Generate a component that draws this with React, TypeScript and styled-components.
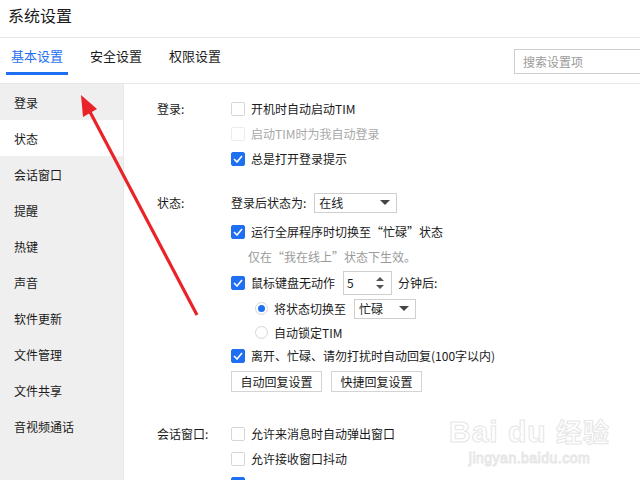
import React from 'react';
import styled, { createGlobalStyle } from 'styled-components';

const GlobalStyle = createGlobalStyle`
  html, body {
    margin: 0;
    padding: 0;
    background: #ffffff;
  }
  body {
    font-family: 'Noto Sans CJK SC', 'Noto Sans', sans-serif;
    color: #222;
  }
`;

const BLUE = '#1f6ff2';

const Window = styled.div`
  position: relative;
  width: 640px;
  height: 480px;
  overflow: hidden;
  background: #fff;
`;

const TitleBar = styled.div`
  height: 38px;
  box-sizing: border-box;
  padding: 4px 0 0 8px;
  font-size: 16px;
  line-height: 22px;
  color: #1a1a1a;
  border-bottom: 1px solid #e8e8e8;
`;

const TabBar = styled.div`
  height: 45px;
  display: flex;
  align-items: stretch;
  padding-left: 6px;
  border-bottom: 1px solid #e8e8e8;
`;

const Tab = styled.div<{ $active?: boolean }>`
  width: 62px;
  margin-right: 17px;
  height: 37px;
  margin-bottom: 8px;
  align-self: flex-end;
  display: flex;
  align-items: center;
  justify-content: center;
  box-sizing: border-box;
  padding-top: 1px;
  font-size: 13px;
  color: ${(p) => (p.$active ? BLUE : '#1a1a1a')};
  border-bottom: 3px solid ${(p) => (p.$active ? BLUE : 'transparent')};
`;

const SearchBox = styled.div`
  margin-left: auto;
  align-self: center;
  margin-top: 1px;
  width: 126px;
  height: 25px;
  box-sizing: border-box;
  border: 1px solid #cfcfcf;
  border-right: none;
  padding-left: 8px;
  display: flex;
  align-items: center;
  font-size: 12px;
  color: #9a9a9a;
`;

const Body = styled.div`
  display: flex;
  height: 396px;
`;

const Sidebar = styled.div`
  width: 123px;
  flex-shrink: 0;
  background: #efefef;
  border-right: 1px solid #e6e6e6;
`;

const NavItem = styled.div<{ $active?: boolean }>`
  height: 36px;
  display: flex;
  align-items: center;
  padding-left: 14px;
  font-size: 12px;
  color: #1a1a1a;
  background: ${(p) => (p.$active ? '#ffffff' : 'transparent')};
`;

const Content = styled.div`
  flex: 1;
  padding-left: 33px;
  font-size: 12px;
  color: #1a1a1a;
`;

const Section = styled.div<{ $mt: number }>`
  display: grid;
  grid-template-columns: 74px 1fr;
  margin-top: ${(p) => p.$mt}px;
`;

const SectionLabel = styled.div`
  height: 25px;
  display: flex;
  align-items: center;
`;

const Rows = styled.div`
  display: flex;
  flex-direction: column;
`;

const Row = styled.div<{ $h?: number; $mt?: number; $indent?: number }>`
  height: ${(p) => p.$h ?? 25}px;
  margin-top: ${(p) => p.$mt ?? 0}px;
  padding-left: ${(p) => p.$indent ?? 0}px;
  display: flex;
  align-items: center;
  gap: 6px;
  white-space: nowrap;
`;

const Box = styled.span<{ $checked?: boolean; $disabled?: boolean }>`
  width: 14px;
  height: 14px;
  box-sizing: border-box;
  border-radius: 2px;
  flex-shrink: 0;
  display: inline-flex;
  align-items: center;
  justify-content: center;
  background: ${(p) => (p.$checked ? BLUE : '#fff')};
  border: 1px solid
    ${(p) => (p.$checked ? BLUE : p.$disabled ? '#ececec' : '#d6d6d6')};
`;

const Label = styled.span<{ $disabled?: boolean }>`
  color: ${(p) => (p.$disabled ? '#a8a8a8' : '#1a1a1a')};
`;

const Hint = styled.div`
  height: 24px;
  display: flex;
  align-items: center;
  padding-left: 17px;
  color: #9a9a9a;
`;

const RadioDot = styled.span<{ $checked?: boolean }>`
  width: 13px;
  height: 13px;
  box-sizing: border-box;
  border-radius: 50%;
  border: 1px solid #d6d6d6;
  display: inline-flex;
  align-items: center;
  justify-content: center;
  &::after {
    content: '';
    width: 7px;
    height: 7px;
    border-radius: 50%;
    background: ${(p) => (p.$checked ? BLUE : 'transparent')};
  }
`;

const Select = styled.span<{ $w: number }>`
  width: ${(p) => p.$w}px;
  height: 20px;
  margin-left: 2px;
  box-sizing: border-box;
  border: 1px solid #cfcfcf;
  display: inline-flex;
  align-items: center;
  justify-content: space-between;
  padding: 0 6px 0 4px;
  font-size: 12px;
  background: #fff;
  &::after {
    content: '';
    border-left: 5px solid transparent;
    border-right: 5px solid transparent;
    border-top: 5px solid #444;
  }
`;

const Spin = styled.span`
  width: 49px;
  height: 24px;
  box-sizing: border-box;
  border: 1px solid #cfcfcf;
  display: inline-flex;
  align-items: center;
  justify-content: space-between;
  padding: 0 7px 0 3px;
  margin-left: 2px;
`;

const SpinArrows = styled.span`
  display: inline-flex;
  flex-direction: column;
  gap: 4px;
  &::before,
  &::after {
    content: '';
    border-left: 4px solid transparent;
    border-right: 4px solid transparent;
  }
  &::before {
    border-bottom: 4px solid #555;
  }
  &::after {
    border-top: 4px solid #555;
  }
`;

const Button = styled.span`
  width: 91px;
  height: 21px;
  box-sizing: border-box;
  border: 1px solid #d4d4d4;
  display: inline-flex;
  align-items: center;
  justify-content: center;
  margin-right: 3px;
`;

const ButtonRow = styled.div`
  display: flex;
  gap: 6px;
  margin-top: 3px;
  height: 21px;
`;

const Overlay = styled.svg`
  position: absolute;
  left: 0;
  top: 0;
  pointer-events: none;
`;

const Watermark = styled.div`
  position: absolute;
  right: 30px;
  bottom: 14px;
  display: flex;
  flex-direction: column;
  align-items: center;
  font-family: 'Liberation Sans', Arial, sans-serif;
  color: transparent;
  -webkit-text-stroke: 1px #e6e6e6;
  pointer-events: none;
`;

const WatermarkMain = styled.div`
  font-size: 30px;
  font-weight: bold;
  line-height: 36px;
  letter-spacing: 1px;
  span {
    font-family: 'Noto Sans CJK SC', sans-serif;
    font-size: 26px;
  }
`;

const WatermarkSub = styled.div`
  font-size: 14px;
  line-height: 16px;
  letter-spacing: 0.5px;
`;

const Check = () => (
  <svg width="10" height="8" viewBox="0 0 10 8">
    <polyline points="1,4 4,7 9,1" fill="none" stroke="#fff" strokeWidth="1.6" />
  </svg>
);

const CheckRow: React.FC<{
  text: string;
  checked?: boolean;
  disabled?: boolean;
  mt?: number;
  h?: number;
}> = ({ text, checked, disabled, mt, h }) => (
  <Row $mt={mt} $h={h}>
    <Box $checked={checked} $disabled={disabled}>
      {checked && <Check />}
    </Box>
    <Label $disabled={disabled}>{text}</Label>
  </Row>
);

const navItems = [
  '登录',
  '状态',
  '会话窗口',
  '提醒',
  '热键',
  '声音',
  '软件更新',
  '文件管理',
  '文件共享',
  '音视频通话',
];

export default function App() {
  return (
    <Window>
      <GlobalStyle />
      <TitleBar>系统设置</TitleBar>
      <TabBar>
        <Tab $active>基本设置</Tab>
        <Tab>安全设置</Tab>
        <Tab>权限设置</Tab>
        <SearchBox>搜索设置项</SearchBox>
      </TabBar>
      <Body>
        <Sidebar>
          {navItems.map((n) => (
            <NavItem key={n} $active={n === '状态'}>
              {n}
            </NavItem>
          ))}
        </Sidebar>
        <Content>
          <Section $mt={12}>
            <SectionLabel>登录:</SectionLabel>
            <Rows>
              <CheckRow text="开机时自动启动TIM" />
              <CheckRow text="启动TIM时为我自动登录" disabled />
              <CheckRow text="总是打开登录提示" checked />
            </Rows>
          </Section>

          <Section $mt={19}>
            <SectionLabel>状态:</SectionLabel>
            <Rows>
              <Row>
                <span>登录后状态为:</span>
                <Select $w={83}>在线</Select>
              </Row>
              <CheckRow text="运行全屏程序时切换至“忙碌”状态" checked mt={4} />
              <Hint>仅在“我在线上”状态下生效。</Hint>
              <Row $mt={2}>
                <Box $checked>
                  <Check />
                </Box>
                <span>鼠标键盘无动作</span>
                <Spin>
                  5<SpinArrows />
                </Spin>
                <span>分钟后:</span>
              </Row>
              <Row $mt={1} $indent={24}>
                <RadioDot $checked />
                <span>将状态切换至</span>
                <Select $w={62}>忙碌</Select>
              </Row>
              <Row $h={22} $indent={24}>
                <RadioDot />
                <span>自动锁定TIM</span>
              </Row>
              <CheckRow text="离开、忙碌、请勿打扰时自动回复(100字以内)" checked />
              <ButtonRow>
                <Button>自动回复设置</Button>
                <Button>快捷回复设置</Button>
              </ButtonRow>
            </Rows>
          </Section>

          <Section $mt={29}>
            <SectionLabel>会话窗口:</SectionLabel>
            <Rows>
              <CheckRow text="允许来消息时自动弹出窗口" />
              <CheckRow text="允许接收窗口抖动" />
              <CheckRow text="" checked />
            </Rows>
          </Section>
        </Content>
      </Body>

      <Watermark>
        <WatermarkMain>
          Bai du <span>经验</span>
        </WatermarkMain>
        <WatermarkSub>jingyan.baidu.com</WatermarkSub>
      </Watermark>

      <Overlay width="640" height="480" viewBox="0 0 640 480">
        <line x1="197" y1="315" x2="89" y2="110" stroke="#ea2329" strokeWidth="3.2" />
        <polygon points="81,95 97,109 83,117" fill="#ea2329" />
      </Overlay>
    </Window>
  );
}
